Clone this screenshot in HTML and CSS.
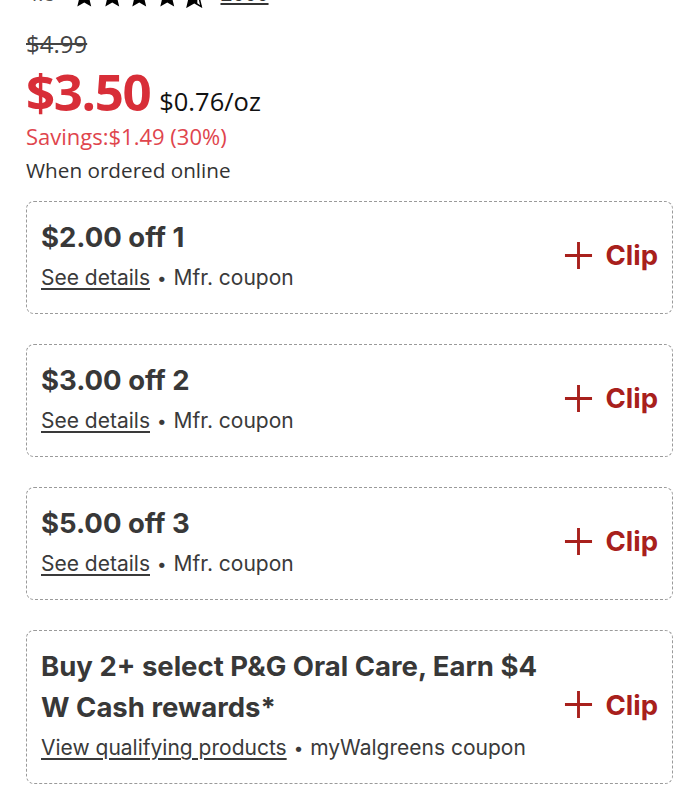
FILE: index.html
```html
<!DOCTYPE html>
<html>
<head>
<meta charset="utf-8">
<link rel="stylesheet" href="styles.css">
</head>
<body>
<div class="page">
  <div class="rating">
    <span class="rating-value">4.8</span>
    <span class="stars">
      <svg class="star" viewBox="0 0 24 24"><path d="M12 1.5l3.1 7.2 7.8.7-5.9 5.1 1.8 7.6L12 18.1l-6.8 4 1.8-7.6-5.9-5.1 7.8-.7z"/></svg>
      <svg class="star" viewBox="0 0 24 24"><path d="M12 1.5l3.1 7.2 7.8.7-5.9 5.1 1.8 7.6L12 18.1l-6.8 4 1.8-7.6-5.9-5.1 7.8-.7z"/></svg>
      <svg class="star" viewBox="0 0 24 24"><path d="M12 1.5l3.1 7.2 7.8.7-5.9 5.1 1.8 7.6L12 18.1l-6.8 4 1.8-7.6-5.9-5.1 7.8-.7z"/></svg>
      <svg class="star" viewBox="0 0 24 24"><path d="M12 1.5l3.1 7.2 7.8.7-5.9 5.1 1.8 7.6L12 18.1l-6.8 4 1.8-7.6-5.9-5.1 7.8-.7z"/></svg>
      <svg class="star" viewBox="0 0 24 24"><defs><clipPath id="half"><rect x="0" y="0" width="15" height="24"/></clipPath></defs><path d="M12 1.5l3.1 7.2 7.8.7-5.9 5.1 1.8 7.6L12 18.1l-6.8 4 1.8-7.6-5.9-5.1 7.8-.7z" fill="none" stroke="#000" stroke-width="1.5"/><path clip-path="url(#half)" d="M12 1.5l3.1 7.2 7.8.7-5.9 5.1 1.8 7.6L12 18.1l-6.8 4 1.8-7.6-5.9-5.1 7.8-.7z"/></svg>
    </span>
    <a class="review-count">2000</a>
  </div>

  <div class="price-block">
    <div class="old-price">$4.99</div>
    <div class="price-row">
      <span class="price">$3.50</span>
      <span class="unit-price">$0.76/oz</span>
    </div>
    <div class="savings">Savings:$1.49 (30%)</div>
    <div class="online">When ordered online</div>
  </div>

  <div class="coupons">
    <div class="coupon">
      <div class="coupon-info">
        <div class="coupon-title">$2.00 off 1</div>
        <div class="coupon-meta"><a class="meta-link">See details</a><span class="dot">•</span><span>Mfr. coupon</span></div>
      </div>
      <button class="clip"><svg class="plus" viewBox="0 0 30 30"><path d="M15 1v28M1 15h28" stroke="currentColor" stroke-width="3" fill="none"/></svg><span>Clip</span></button>
    </div>
    <div class="coupon">
      <div class="coupon-info">
        <div class="coupon-title">$3.00 off 2</div>
        <div class="coupon-meta"><a class="meta-link">See details</a><span class="dot">•</span><span>Mfr. coupon</span></div>
      </div>
      <button class="clip"><svg class="plus" viewBox="0 0 30 30"><path d="M15 1v28M1 15h28" stroke="currentColor" stroke-width="3" fill="none"/></svg><span>Clip</span></button>
    </div>
    <div class="coupon">
      <div class="coupon-info">
        <div class="coupon-title">$5.00 off 3</div>
        <div class="coupon-meta"><a class="meta-link">See details</a><span class="dot">•</span><span>Mfr. coupon</span></div>
      </div>
      <button class="clip"><svg class="plus" viewBox="0 0 30 30"><path d="M15 1v28M1 15h28" stroke="currentColor" stroke-width="3" fill="none"/></svg><span>Clip</span></button>
    </div>
    <div class="coupon">
      <div class="coupon-info">
        <div class="coupon-title">Buy 2+ select P&amp;G Oral Care, Earn $4 W Cash rewards*</div>
        <div class="coupon-meta"><a class="meta-link">View qualifying products</a><span class="dot">•</span><span>myWalgreens coupon</span></div>
      </div>
      <button class="clip"><svg class="plus" viewBox="0 0 30 30"><path d="M15 1v28M1 15h28" stroke="currentColor" stroke-width="3" fill="none"/></svg><span>Clip</span></button>
    </div>
  </div>
</div>
</body>
</html>
```

FILE: styles.css
```css
html, body {
  margin: 0;
  padding: 0;
  background: #fff;
}

.page {
  padding: 0 21px 0 26px;
  overflow: hidden;
  height: 800px;
  box-sizing: border-box;
}

.rating {
  display: flex;
  align-items: flex-end;
  margin-top: -16px;
  height: 24px;
  font-family: "Open Sans", sans-serif;
  font-size: 21px;
  line-height: 24px;
}

.rating-value {
  color: #555;
  width: 46px;
  margin-bottom: 3px;
}

.stars {
  display: flex;
  gap: 3px;
}

.star {
  width: 24.5px;
  height: 24.5px;
  fill: #000;
}

.review-count {
  margin-left: 14px;
  margin-bottom: 3px;
  color: #333;
  text-decoration: underline;
}

.price-block {
  font-family: "Open Sans", sans-serif;
  margin-top: 21px;
}

.old-price {
  font-size: 24px;
  line-height: 30px;
  color: #444;
  text-decoration: line-through;
  text-decoration-thickness: 1.5px;
}

.price-row {
  display: flex;
  align-items: baseline;
  gap: 9px;
  margin-top: 4px;
}

.price {
  font-size: 51px;
  line-height: 56px;
  font-weight: 700;
  letter-spacing: -1.4px;
  color: #d82e38;
}

.unit-price {
  font-size: 25.5px;
  color: #111;
}

.savings {
  font-size: 22px;
  line-height: 30px;
  color: #e0454d;
  margin-top: 2px;
}

.online {
  font-size: 20.7px;
  line-height: 30px;
  color: #333;
  margin-top: 4px;
}

.coupons {
  display: flex;
  flex-direction: column;
  gap: 30px;
  margin-top: 16px;
}

.coupon {
  display: flex;
  align-items: center;
  border: 1.5px dashed #9a9a9a;
  border-radius: 8px;
  padding: 15px 14px 20px 14px;
  font-family: Inter, sans-serif;
}

.coupon-info {
  flex: 1;
  min-width: 0;
  padding-right: 12px;
}

.coupon-title {
  font-size: 27.5px;
  line-height: 41px;
  font-weight: 700;
  color: #383838;
}

.coupon-meta {
  margin-top: 5px;
  font-size: 21px;
  line-height: 30px;
  color: #3a3a3a;
  display: flex;
  align-items: center;
}

.meta-link {
  text-decoration: underline;
  text-underline-offset: 3px;
  text-decoration-thickness: 1.5px;
}

.dot {
  margin: 0 7px;
  font-size: 17px;
}

.clip {
  display: flex;
  align-items: center;
  gap: 12px;
  border: 0;
  background: none;
  padding: 0;
  margin-left: 12px;
  color: #a8201c;
  font-family: Inter, sans-serif;
  font-size: 27.5px;
  font-weight: 700;
}

.plus {
  width: 29px;
  height: 29px;
}
```
